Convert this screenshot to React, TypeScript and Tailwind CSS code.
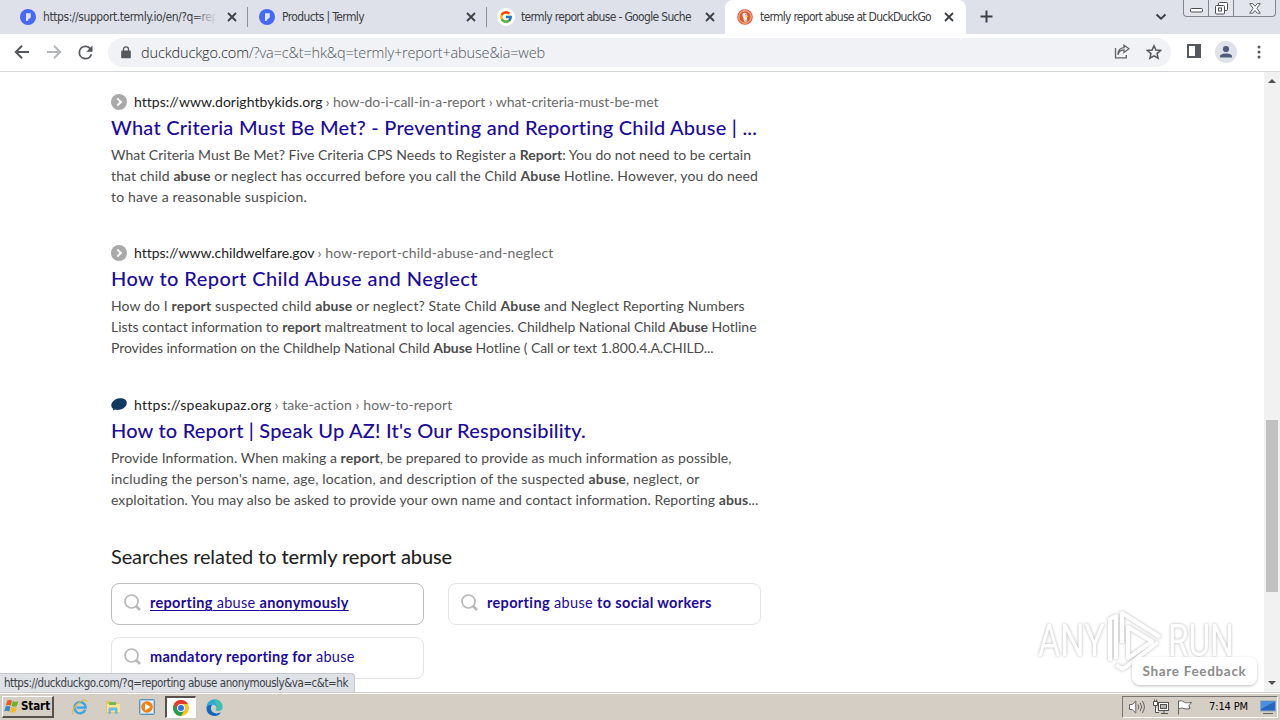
import { useLayoutEffect, useRef, type ReactNode } from "react";
import { FcGoogle } from "react-icons/fc";

/** One line of text, tracked so that it fills the given width. */
function Line({ w, className = "", children }: { w: number; className?: string; children: ReactNode }) {
  const ref = useRef<HTMLSpanElement>(null);
  useLayoutEffect(() => {
    const el = ref.current;
    if (!el) return;
    el.style.letterSpacing = "0px";
    const n = (el.textContent ?? "").length;
    el.style.letterSpacing = `${(w - el.getBoundingClientRect().width) / n}px`;
  }, [w]);
  return (
    <span ref={ref} className={`inline-block shrink-0 whitespace-pre ${className}`}>
      {children}
    </span>
  );
}

function Close() {
  return (
    <svg width="10" height="10" viewBox="0 0 10 10" className="shrink-0" stroke="#3c4043" strokeWidth="1.8">
      <path d="M1 1l8 8M9 1l-8 8" />
    </svg>
  );
}

function Termly() {
  return (
    <svg width="16" height="16" viewBox="0 0 16 16" className="shrink-0">
      <circle cx="8" cy="8" r="8" fill="#4767f5" />
      <path d="M6 4.200h4.800v3.400c0 1.300-.8 2.100-2.200 2.300L7.600 12H6z" fill="#dfe5ff" />
    </svg>
  );
}

function Duck() {
  return (
    <svg width="16" height="16" viewBox="0 0 16 16" className="shrink-0">
      <circle cx="8" cy="8" r="7.800" fill="#de5833" />
      <circle cx="8" cy="8" r="6.200" fill="none" stroke="#f8d5ca" strokeWidth=".9" />
      <path d="M5.800 4.400c1.400-1.200 4.200-.6 4.400 1.800.2 1.400-.4 2.400-.2 3.600l.2 2.400c-1 .6-2.200.6-3 .4L6 8.200C5.500 6.700 5.100 5.200 5.800 4.400z" fill="#fbece6" />
      <path d="M8.300 7.300c1.200-.5 2.400-.4 3.100 0-.6.900-1.900.9-3.100.7z" fill="#fdd20a" />
      <path d="M8.400 10.400l2.600.7-2.400 1z" fill="#65bc46" />
      <circle cx="8.900" cy="5.700" r=".6" fill="#2d4f8e" />
    </svg>
  );
}

function TopBar() {
  return (
    <header className="flex h-[34px] shrink-0 bg-[#dee1e9] font-['DejaVu_Sans_Condensed','DejaVu_Sans',sans-serif] text-[12px] text-[#3c4043]">
      <div className="flex h-[34px] w-[248px] shrink-0 items-center pl-5">
        <Termly />
        <div className="relative ml-[7px] w-[174px] overflow-hidden">
          <Line w={175}>https://support.termly.io/en/?q=rep</Line>
          <span className="absolute right-0 top-0 h-full w-[24px] bg-linear-to-r from-[#dee1e900] to-[#dee1e9]" />
        </div>
        <div className="ml-[10px]"><Close /></div>
      </div>
      <div className="flex h-[34px] w-[239px] shrink-0 items-center">
        <span className="-ml-px mr-[11px] h-5 w-px bg-[#8c9097]" />
        <Termly />
        <Line w={82} className="ml-[7px]">Products | Termly</Line>
        <div className="ml-auto mr-[11px]"><Close /></div>
      </div>
      <div className="flex h-[34px] w-[238px] shrink-0 items-center">
        <span className="-ml-px mr-[10px] h-5 w-px bg-[#8c9097]" />
        <span className="flex size-[18px] items-center justify-center rounded-full bg-white"><FcGoogle size={14} /></span>
        <Line w={170} className="ml-[6px]">termly report abuse - Google Suche</Line>
        <div className="ml-auto mr-[10px]"><Close /></div>
      </div>
      <div className="flex h-[34px] w-[241px] shrink-0 items-center rounded-t-lg bg-white pl-3">
        <Duck />
        <Line w={171} className="ml-[7px]">termly report abuse at DuckDuckGo</Line>
        <div className="ml-auto mr-[12px]"><Close /></div>
      </div>
      <svg width="13" height="13" viewBox="0 0 13 13" className="ml-[14px] mt-[10px]" stroke="#3c4043" strokeWidth="2">
        <path d="M6.500 .5v12M.5 6.500h12" />
      </svg>
      <svg width="12" height="8" viewBox="0 0 12 8" className="ml-auto mt-[13px]" fill="none" stroke="#3c4043" strokeWidth="2">
        <path d="M1.500 1.500L6 5.700l4.500-4.200" />
      </svg>
      <div className="ml-[16px] mr-1 flex h-[17px] w-[93px] rounded-b-[4px] border border-t-0 border-[#7f858e] bg-[#e2e5ec]">
        <div className="flex w-[25px] items-center justify-center border-r border-[#7f858e]">
          <svg width="13" height="17" viewBox="0 0 13 17"><rect x=".5" y="8.500" width="12" height="3.500" rx="1" fill="#fff" stroke="#4a4f57" /></svg>
        </div>
        <div className="flex w-[25px] items-center justify-center border-r border-[#7f858e]">
          <svg width="13" height="13" viewBox="0 0 13 13" fill="#fff" stroke="#4a4f57"><rect x="3.500" y=".5" width="9" height="8" rx="1" /><rect x=".5" y="3.500" width="9" height="8.500" rx="1" /><rect x="3.500" y="6" width="3" height="3" /></svg>
        </div>
        <div className="flex flex-1 items-center justify-center">
          <svg width="12" height="11" viewBox="0 0 12 11" fill="#fff" stroke="#4a4f57" strokeWidth=".9"><path d="M.7.600h3L6 3.300 8.300.6h3L7.900 5.400l3.400 4.800h-3L6 7.500 3.700 10.200h-3l3.400-4.800z" /></svg>
        </div>
      </div>
    </header>
  );
}

function Toolbar() {
  return (
    <div className="flex h-[38px] shrink-0 items-center border-b border-[#d5d7da] bg-white">
      <svg width="16" height="16" viewBox="0 0 16 16" className="ml-[14px] mb-px" fill="none" stroke="#55585c" strokeWidth="2"><path d="M15 8H2.500M8 1.800L1.800 8 8 14.200" /></svg>
      <svg width="16" height="16" viewBox="0 0 16 16" className="mb-px ml-4" fill="none" stroke="#b5b7ba" strokeWidth="2"><path d="M1 8h12.500M8 1.800L14.200 8 8 14.200" /></svg>
      <svg width="24" height="24" viewBox="0 0 24 24" className="mb-px ml-[13px] size-[21px]" fill="#55585c"><path d="M17.650 6.350A7.960 7.960 0 0 0 12 4a8 8 0 1 0 7.730 10h-2.080A6 6 0 1 1 12 6c1.660 0 3.140.69 4.220 1.780L13 11h7V4z" /></svg>
      <div className="ml-[12px] flex h-[29px] w-[1063px] items-center rounded-full bg-[#f0f2f5] pl-[13px] pr-[9px]">
        <svg width="10" height="13" viewBox="0 0 10 13" fill="#55585c" className="mb-px"><path d="M1 4.600h8q.8 0 .8.800v6q0 .8-.8.800H1q-.8 0-.8-.8v-6q0-.8.800-.8z" /><path d="M2.500 5V3.300a2.500 2.500 0 0 1 5 0V5" fill="none" stroke="#55585c" strokeWidth="1.300" /></svg>
        <Line w={404} className="ml-[10px] font-['Open_Sans','Noto_Sans',sans-serif] text-[14.5px] font-light leading-5 text-[#50555b]">
          <span className="text-[#1d1f22]">duckduckgo.com</span>/?va=c&amp;t=hk&amp;q=termly+report+abuse&amp;ia=web
        </Line>
        <svg width="16" height="16" viewBox="0 0 16 16" className="mb-px ml-auto" fill="none" stroke="#5f6368" strokeWidth="1.300"><path d="M1.500 4v9.800h10.800V11M4 11c.4-3.400 2.300-5 6-5.200V8.500L15 4.800 10 1.200v2.500C6 4 4 7 4 11z" /></svg>
        <svg width="16" height="16" viewBox="0 0 16 16" className="mb-px ml-[16px]" fill="none" stroke="#55585c" strokeWidth="1.500"><path d="M8 1.800l1.900 4.300 4.700.4-3.600 3.100 1.100 4.600L8 11.800l-4.100 2.400L5 9.600 1.400 6.500l4.700-.4z" /></svg>
      </div>
      <svg width="14" height="14" viewBox="0 0 14 14" className="mb-[3px] ml-4" fill="#55585c"><path d="M0 0h14v14H0zM2 2v10h6V2z" fillRule="evenodd" /></svg>
      <svg width="22" height="22" viewBox="0 0 22 22" className="mb-px ml-[14px]"><circle cx="11" cy="11" r="11" fill="#dfe2e8" /><circle cx="11" cy="8" r="3.100" fill="#4f5b7a" /><path d="M5 16.500v-1.300C5 13.200 8.500 12.400 11 12.400s6 .8 6 2.800v1.300z" fill="#4f5b7a" /></svg>
      <svg width="4" height="14" viewBox="0 0 4 14" className="mb-px ml-[20px]" fill="#55585c"><circle cx="2" cy="2" r="1.500" /><circle cx="2" cy="7" r="1.500" /><circle cx="2" cy="12" r="1.500" /></svg>
    </div>
  );
}

const arrowIcon = (
  <svg width="16" height="16" viewBox="0 0 16 16" className="shrink-0"><circle cx="8" cy="8" r="8" fill="#a9a9a9" /><path d="M6.300 4.600L9.900 8l-3.600 3.400" fill="none" stroke="#fff" strokeWidth="2" /></svg>
);
const speakIcon = (
  <svg width="16" height="16" viewBox="0 0 16 16" className="shrink-0"><path d="M.3 9.400C.4 5.800 4 2.600 8.500 2.200c4-.3 7.200 1.200 7.300 4.400.1 3.800-3.300 6.700-7.600 7.200-1.500.2-3 .2-4.200-.2l-2 .8.1-1.800C1 12 .3 11 .3 9.400z" fill="#12395f" /></svg>
);

const b = (t: string) => <b className="font-bold">{t}</b>;

type Result = { icon: ReactNode; host: string; hostW: number; path: string; pathW: number; title: string; titleW: number; lines: { w: number; text: ReactNode }[] };

const results: Result[] = [
  {
    icon: arrowIcon, host: "https://www.dorightbykids.org", hostW: 188, path: "› how-do-i-call-in-a-report › what-criteria-must-be-met", pathW: 333,
    title: "What Criteria Must Be Met? - Preventing and Reporting Child Abuse | ...", titleW: 647,
    lines: [
      { w: 640, text: <>What Criteria Must Be Met? Five Criteria CPS Needs to Register a {b("Report")}: You do not need to be certain</> },
      { w: 647, text: <>that child {b("abuse")} or neglect has occurred before you call the Child {b("Abuse")} Hotline. However, you do need</> },
      { w: 196, text: <>to have a reasonable suspicion.</> },
    ],
  },
  {
    icon: arrowIcon, host: "https://www.childwelfare.gov", hostW: 180, path: "› how-report-child-abuse-and-neglect", pathW: 236,
    title: "How to Report Child Abuse and Neglect", titleW: 367,
    lines: [
      { w: 634, text: <>How do I {b("report")} suspected child {b("abuse")} or neglect? State Child {b("Abuse")} and Neglect Reporting Numbers</> },
      { w: 646, text: <>Lists contact information to {b("report")} maltreatment to local agencies. Childhelp National Child {b("Abuse")} Hotline</> },
      { w: 603, text: <>Provides information on the Childhelp National Child {b("Abuse")} Hotline ( Call or text 1.800.4.A.CHILD...</> },
    ],
  },
  {
    icon: speakIcon, host: "https://speakupaz.org", hostW: 137, path: "› take-action › how-to-report", pathW: 178,
    title: "How to Report | Speak Up AZ! It's Our Responsibility.", titleW: 475,
    lines: [
      { w: 621, text: <>Provide Information. When making a {b("report")}, be prepared to provide as much information as possible,</> },
      { w: 589, text: <>including the person's name, age, location, and description of the suspected {b("abuse")}, neglect, or</> },
      { w: 648, text: <>exploitation. You may also be asked to provide your own name and contact information. Reporting {b("abus")}...</> },
    ],
  },
];

function ResultItem({ r }: { r: Result }) {
  return (
    <article className="mb-[35px] h-[116.300px] shrink-0">
      <div className="flex h-[21px] items-center text-[14px] leading-[21px] text-[#6b6b6b]">
        {r.icon}
        <Line w={r.hostW} className="ml-[7px] text-[#222]">{r.host}</Line>
        <Line w={r.pathW} className="ml-[3px]">{r.path}</Line>
      </div>
      <h2 className="mb-[2px] flex h-[30px] items-center text-[20px] font-medium leading-[30px] text-[#1c0a9b]">
        <Line w={r.titleW}>{r.title}</Line>
      </h2>
      {r.lines.map((l, i) => (
        <p key={i} className="flex h-[21px] text-[14px] leading-[21px] text-[#4b4b4b]"><Line w={l.w}>{l.text}</Line></p>
      ))}
    </article>
  );
}

function Related({ w, active, children }: { w: number; active?: boolean; children: ReactNode }) {
  return (
    <a className={`flex h-[42px] items-center rounded-lg border bg-white pb-[2px] pl-[12px] text-[14.5px] text-[#1c0a9b] ${active ? "border-[#bdbdbd] underline underline-offset-2" : "border-[#e3e3e3]"}`}>
      <svg width="17" height="17" viewBox="0 0 17 17" fill="none" stroke="#b8b8b8" strokeWidth="1.700"><circle cx="7.500" cy="7.500" r="6.500" /><path d="M12 12l4 4" strokeWidth="2.500" /></svg>
      <Line w={w} className="ml-[9px]">{children}</Line>
    </a>
  );
}

function Watermark() {
  return (
    <div className="absolute left-[1038px] top-[536px] flex h-[66px] items-center font-['Roboto',sans-serif] text-[45px] leading-[34px] text-white [filter:drop-shadow(0_0_1.5px_#b4b4b4)]">
      <span className="flex h-[34px] w-[68px] items-center"><span className="inline-block origin-left scale-x-[0.760]">ANY</span></span>
      <svg width="58" height="64" viewBox="0 0 58 64" fill="none" stroke="#fff" strokeWidth="4" strokeLinejoin="round">
        <path d="M4 52V10l6-3v43M16 34V4l38 24M52 33L17 60l-7-4M22 18v31l24-16.500z" />
      </svg>
      <span className="ml-[4px] flex h-[34px] w-[66px] items-center"><span className="inline-block origin-left scale-x-[0.740]">RUN</span></span>
    </div>
  );
}

function ChromeIcon() {
  return (
    <svg width="16" height="16" viewBox="0 0 16 16">
      <circle cx="8" cy="8" r="8" fill="#fcc31e" />
      <path d="M1.070 4A8 8 0 0 0 8 16l3.460-6L8 8z" fill="#269e4b" />
      <path d="M1.070 4A8 8 0 0 1 14.930 4H8L4.500 10z" fill="#e33b2e" />
      <circle cx="8" cy="8" r="3.900" fill="#fff" /><circle cx="8" cy="8" r="3" fill="#2f73e8" />
    </svg>
  );
}

function Taskbar() {
  return (
    <footer className="flex h-[28px] shrink-0 items-center border-t border-[#d4cfc6] bg-[#d5cec5] pt-px shadow-[inset_0_1px_0_#fff]">
      <button className="ml-[2px] flex h-[22px] w-[52px] items-center border border-b-2 border-r-2 border-[#fff] border-b-[#55524e] border-r-[#55524e] pl-px">
        <svg width="16" height="15" viewBox="0 0 16 15">
          <path d="M3.300 1.600C5 .700 6.600.9 8 1.800L6.700 6.800C5.300 5.900 3.700 5.800 1.900 6.600z" fill="#e8592a" />
          <path d="M8.800 2.100c1.700.9 3.500.9 5.600-.2L13 7c-2 1-3.700.9-5.500.1z" fill="#71b32b" />
          <path d="M1.700 7.500c1.700-.8 3.300-.7 4.800.2L5.200 12.600C3.700 11.700 2.100 11.600.3 12.500z" fill="#2e86d4" />
          <path d="M7.300 8c1.700.9 3.500.9 5.500-.1l-1.300 5c-2 1-3.800.9-5.500.1z" fill="#f8b91d" />
        </svg>
        <Line w={29} className="ml-px mt-px font-['DejaVu_Sans_Condensed','DejaVu_Sans',sans-serif] text-[11.500px] font-bold text-black">Start</Line>
      </button>
      <svg width="18" height="18" viewBox="0 0 18 18" className="ml-[17px]" fill="none">
        <path d="M14.300 11.800A5.600 5.600 0 1 1 14.700 9.600H5.500" stroke="#3ba5e5" strokeWidth="2.400" />
        <path d="M2.500 16C-.5 14 4 6.500 10 3.200c3.500-1.900 6-1.400 5.600.8" stroke="#e9b93b" strokeWidth="1.200" />
      </svg>
      <svg width="16" height="16" viewBox="0 0 16 16" className="ml-[16px]">
        <path d="M1 2h5l1 2h7v10H1z" fill="#e8c35c" /><path d="M2 5h13v8H2z" fill="#f9e596" /><path d="M4 3h7v3H4z" fill="#78b65a" />
        <path d="M3.500 15V9.500q0-1 1-1h7q1 0 1 1V15H10v-3.500H6V15z" fill="#70b9e2" />
      </svg>
      <svg width="16" height="16" viewBox="0 0 16 16" className="ml-[18px]">
        <rect x=".5" y=".5" width="15" height="15" rx="1" fill="#a9cde8" stroke="#5b93bd" /><rect x="2" y="2" width="12" height="12" fill="#e3eff8" /><circle cx="8" cy="8" r="5.800" fill="#ef8213" /><path d="M6 4.600L11.500 8 6 11.400z" fill="#fff" />
      </svg>
      <div className="ml-[10px] flex h-[22px] w-[31px] items-center justify-center border border-l-2 border-t-2 border-white border-l-[#55524e] border-t-[#55524e] bg-white"><ChromeIcon /></div>
      <svg width="17" height="17" viewBox="0 0 17 17" className="ml-[10px]">
        <path d="M.5 8.500a8 8 0 0 1 16-.7c0 3-2 4-4 4-1.600 0-2.800-.4-2.800-1.100 0-.5.800-.8.8-2 0-1.500-1.500-3-4-3-3 0-5.200 1.500-6 2.800z" fill="#2fa9d6" />
        <path d="M9.500.6c4 .5 7 3.500 7 7.200 0 3-2 4-4 4-1.600 0-2.800-.4-2.800-1.100 0-.5.800-.8.8-2C10.500 5 8 4 9.500.600z" fill="#45c4a0" opacity=".8" />
        <path d="M.5 8.500C1 6.500 3.500 5.400 6.500 5.700 4.500 7 4.300 11 6.600 13c2 1.800 5.400 1.800 8.600.3A8 8 0 0 1 .5 8.500z" fill="#1268bd" />
      </svg>
      <div className="ml-auto mr-[2px] flex h-[22px] w-[156px] items-center border border-b-white border-l-[#77736e] border-r-white border-t-[#77736e] pl-[5px]">
        <svg width="18" height="16" viewBox="0 0 18 16" fill="#fff" stroke="#65625e"><path d="M1.500 5.500h2.700L7.800 2v12l-3.600-3.500H1.500z" /><path d="M10 5.500q1.700 2.500 0 5M12.200 3.800q3 4.200 0 8.400M14.300 2q4.200 6 0 12" fill="none" /></svg>
        <svg width="17" height="16" viewBox="0 0 17 16" className="ml-[7px]" fill="#fff" stroke="#55524e"><rect x="5.500" y="3.500" width="10" height="8" /><rect x="7.500" y="5.500" width="6" height="4" fill="#b8b5b0" /><path d="M8 14.500h7M11 12v2M.5 2.500h4v4h-4zM1.500.5v2M3.500.5v2M2.500 7v6.500H6" /></svg>
        <svg width="17" height="16" viewBox="0 0 17 16" className="ml-[6px]" fill="#fff" stroke="#65625e"><path d="M2.500 1.500v14M2.500 2.500C5 1 6.500 2 8 3s3 .8 7.500.5L13 6.500l1 3c-3 .8-4.500.5-6 0s-3-.8-5.500.5" /></svg>
        <Line w={39} className="ml-[16px] mt-px font-['DejaVu_Sans_Condensed','DejaVu_Sans',sans-serif] text-[11px] text-black">7:14 PM</Line>
        <svg width="16" height="15" viewBox="0 0 16 15" className="ml-[12px]"><rect x=".5" y="1" width="15" height="10" fill="#2368bd" stroke="#8aa6c4" /><path d="M1 1.500h14L1 9z" fill="#4c91dd" /><path d="M3 13.500h10" stroke="#65625e" /></svg>
      </div>
    </footer>
  );
}

export default function App() {
  return (
    <div className="flex h-[720px] w-[1280px] flex-col overflow-hidden bg-white">
      <TopBar />
      <Toolbar />
      <div className="relative flex h-[620px] shrink-0 overflow-hidden">
        <main className="flex h-[620px] flex-1 flex-col overflow-hidden pl-[111px] pt-[19px] font-['Lato',sans-serif]">
          {results.map((r) => <ResultItem key={r.host} r={r} />)}
          <h3 className="mt-[-4px] flex h-[30px] shrink-0 items-center text-[20px] text-[#222]">
            <Line w={341}>Searches related to <span className="font-medium">termly report abuse</span></Line>
          </h3>
          <div className="mt-[12px] grid shrink-0 grid-cols-[313px_313px] gap-x-6 gap-y-3">
            <Related w={199} active>{b("reporting")} abuse {b("anonymously")}</Related>
            <Related w={225}>{b("reporting")} abuse {b("to social workers")}</Related>
            <Related w={205}>{b("mandatory reporting for")} abuse</Related>
          </div>
        </main>
        <aside className="flex w-4 flex-col items-center bg-[#f1f1f1]">
          <svg width="8" height="16" viewBox="0 0 8 16" fill="#505050"><path d="M0 11l4-4 4 4z" /></svg>
          <div className="mt-[332px] h-[172px] w-[12px] bg-[#c1c1c1]" />
          <svg width="8" height="16" viewBox="0 0 8 16" className="mt-auto" fill="#505050"><path d="M0 5l4 4 4-4z" /></svg>
        </aside>
        <Watermark />
        <div className="absolute left-[1132px] top-[585px] flex h-[28px] w-[125px] items-center justify-center rounded-lg bg-white/85 text-[13.500px] leading-4 text-[#8b8b8b] shadow-[0_1px_3px_#0004]">
          <Line w={104} className="mb-px font-['Lato',sans-serif] font-bold">Share Feedback</Line>
        </div>
        <div className="absolute bottom-0 left-0 flex h-[19px] w-[355px] items-center rounded-tr-[4px] border-r border-t border-[#c5c8cd] bg-[#dee1e6] pl-1 pt-px font-['DejaVu_Sans_Condensed','DejaVu_Sans',sans-serif] text-[11.500px] text-[#3c4043]">
          <Line w={344}>https://duckduckgo.com/?q=reporting abuse anonymously&amp;va=c&amp;t=hk</Line>
        </div>
      </div>
      <Taskbar />
    </div>
  );
}
